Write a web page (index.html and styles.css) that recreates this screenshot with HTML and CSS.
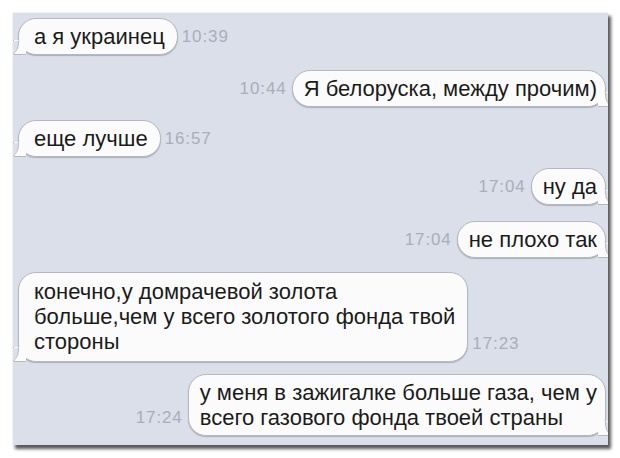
FILE: index.html
```html
<!DOCTYPE html>
<html>
<head>
<title>Переписка</title>
<link rel="stylesheet" href="styles.css">
</head>
<body>
  <div class="frame">
    <div class="chat">
      <div class="row in">
        <div class="bubble">а я украинец</div>
        <span class="time">10:39</span>
      </div>
      <div class="row out gap-a">
        <span class="time">10:44</span>
        <div class="bubble">Я белоруска, между прочим)</div>
      </div>
      <div class="row in gap-b">
        <div class="bubble">еще лучше</div>
        <span class="time">16:57</span>
      </div>
      <div class="row out gap-c">
        <span class="time">17:04</span>
        <div class="bubble">ну да</div>
      </div>
      <div class="row out gap-d">
        <span class="time">17:04</span>
        <div class="bubble">не плохо так</div>
      </div>
      <div class="row in gap-e">
        <div class="bubble long-in">конечно,у домрачевой золота<br>больше,чем у всего золотого фонда твой<br>стороны</div>
        <span class="time">17:23</span>
      </div>
      <div class="row out gap-f">
        <span class="time">17:24</span>
        <div class="bubble">у меня в зажигалке больше газа, чем у<br>всего газового фонда твоей страны</div>
      </div>
    </div>
  </div>
</body>
</html>
```
FILE: styles.css
```css
body {
  margin: 0;
  background: #fff;
  font-family: "Liberation Sans", Arial, sans-serif;
}

.frame {
  margin: 12px;
  width: 596px;
  height: 433px;
  box-sizing: border-box;
  background: #dadfe9;
  border-top: 1px solid #f1f3f7;
  border-left: 1px solid #f1f3f7;
  box-shadow: 3px 4px 3px rgba(0, 0, 0, 0.65);
  overflow: hidden;
}

.chat {
  display: flex;
  flex-direction: column;
  padding: 5px 2px 0 5px;
}

.row {
  display: flex;
  align-items: flex-end;
  gap: 5px;
}

.row.in {
  gap: 4px;
}

.row.out {
  justify-content: flex-end;
}

.gap-a { margin-top: 15px; }
.gap-b { margin-top: 13px; }
.gap-c { margin-top: 11px; }
.gap-d { margin-top: 16px; }
.gap-e { margin-top: 14px; }
.gap-f { margin-top: 12px; }

.bubble {
  position: relative;
  background: #fbfbfc;
  color: #1b1b1b;
  font-size: 22px;
  line-height: 25px;
  padding: 5px 12px 5px 15px;
  border-radius: 18px;
  border: 1px solid #b4b8c1;
  box-shadow: 0 1px 1px rgba(80, 86, 100, 0.35);
}

.out .bubble {
  padding: 5px 8px 5px 11px;
}

.in .bubble::before,
.out .bubble::before {
  content: "";
  position: absolute;
  bottom: -1px;
  width: 12px;
  height: 14px;
  background: #fbfbfc;
  border-bottom: 1px solid #b4b8c1;
}

.in .bubble::before {
  left: -6px;
  border-left: 1px solid #b4b8c1;
  border-bottom-left-radius: 2px 3px;
  border-top-right-radius: 10px;
}

.out .bubble::before {
  right: -6px;
  border-right: 1px solid #b4b8c1;
  border-bottom-right-radius: 2px 3px;
  border-top-left-radius: 10px;
}

.in .bubble::after,
.out .bubble::after {
  content: "";
  position: absolute;
  bottom: -1px;
  width: 10px;
  height: 14px;
  background: #dadfe9;
}

.in .bubble::after {
  left: -11px;
  border-right: 1px solid #b4b8c1;
  border-bottom-right-radius: 10px 12px;
}

.out .bubble::after {
  right: -11px;
  border-left: 1px solid #b4b8c1;
  border-bottom-left-radius: 10px 12px;
}

.long-in {
  padding-top: 6px;
  padding-bottom: 7px;
}

.time {
  color: #a9aebb;
  font-size: 17px;
  letter-spacing: 0.9px;
  line-height: 25px;
  padding-bottom: 6px;
}
```
